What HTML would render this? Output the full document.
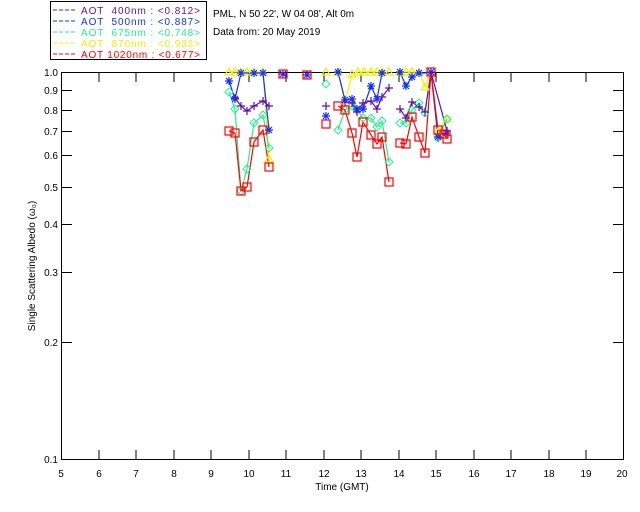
<!DOCTYPE html>
<html><head><style>
html,body{margin:0;padding:0;background:#fff;width:640px;height:512px;overflow:hidden}
svg text{font-family:"Liberation Sans",sans-serif;font-size:10px}
</style></head><body>
<svg width="640" height="512" xmlns="http://www.w3.org/2000/svg">
<defs>
<g id="pl"><path d="M-4 0H4M0 -4V4" stroke="#6010b0" stroke-width="1.2" fill="none"/></g>
<g id="as"><path d="M-4 0H4M0 -4V4M-3 -3L3 3M-3 3L3 -3" stroke="#1030ff" stroke-width="1.2" fill="none"/></g>
<g id="di"><path d="M0 -4L4 0L0 4L-4 0Z" stroke="#20f090" stroke-width="1" fill="none"/></g>
<g id="tr"><path d="M0 -4L4 3H-4Z" stroke="#f0f000" stroke-width="1.2" fill="none"/></g>
<g id="sq"><rect x="-4" y="-4" width="8" height="8" stroke="#ff0000" stroke-width="1.2" fill="none"/></g>
</defs>
<rect x="50.5" y="1.5" width="156" height="58" fill="none" stroke="#000"/>
<g stroke-width="1" stroke-dasharray="4,2">
<line x1="53" y1="10" x2="76" y2="10" stroke="#6010b0"/>
<line x1="53" y1="21" x2="76" y2="21" stroke="#1030ff"/>
<line x1="53" y1="32" x2="76" y2="32" stroke="#20f090"/>
<line x1="53" y1="43" x2="76" y2="43" stroke="#f0f000"/>
<line x1="53" y1="54" x2="76" y2="54" stroke="#ff0000"/>
</g>
<text x="81" y="14" fill="#6010b0" xml:space="preserve" textLength="119" lengthAdjust="spacing">AOT  400nm : &lt;0.812&gt;</text>
<text x="81" y="25" fill="#1030ff" xml:space="preserve" textLength="119" lengthAdjust="spacing">AOT  500nm : &lt;0.887&gt;</text>
<text x="81" y="36" fill="#20f090" xml:space="preserve" textLength="119" lengthAdjust="spacing">AOT  675nm : &lt;0.748&gt;</text>
<text x="81" y="47" fill="#f0f000" xml:space="preserve" textLength="119" lengthAdjust="spacing">AOT  870nm : &lt;0.932&gt;</text>
<text x="81" y="58" fill="#ff0000" xml:space="preserve" textLength="119" lengthAdjust="spacing">AOT 1020nm : &lt;0.677&gt;</text>
<text x="213" y="17" fill="#000">PML, N 50 22', W 04 08', Alt 0m</text>
<text x="213" y="35" fill="#000">Data from: 20 May 2019</text>
<rect x="61.5" y="72.5" width="562" height="387" fill="none" stroke="#000"/>
<g stroke="#000">
<path d="M99 73v9M136 73v9M174 73v9M211 73v9M249 73v9M286 73v9M324 73v9M361 73v9M399 73v9M436 73v9M474 73v9M511 73v9M549 73v9M586 73v9"/>
<path d="M99 459v-9M136 459v-9M174 459v-9M211 459v-9M249 459v-9M286 459v-9M324 459v-9M361 459v-9M399 459v-9M436 459v-9M474 459v-9M511 459v-9M549 459v-9M586 459v-9"/>
<path d="M62 90.5h10M62 110.5h10M62 131.5h10M62 155.5h10M62 187.5h10M62 224.5h10M62 272.5h10M62 342.5h10"/>
<path d="M623 90.5h-10M623 110.5h-10M623 131.5h-10M623 155.5h-10M623 187.5h-10M623 224.5h-10M623 272.5h-10M623 342.5h-10"/>
</g>
<g fill="#000" text-anchor="end">
<text x="58" y="76">1.0</text><text x="58" y="94">0.9</text><text x="58" y="114">0.8</text>
<text x="58" y="135">0.7</text><text x="58" y="159">0.6</text><text x="58" y="191">0.5</text>
<text x="58" y="228">0.4</text><text x="58" y="276">0.3</text><text x="58" y="346">0.2</text>
<text x="58" y="463">0.1</text>
</g>
<g fill="#000" text-anchor="middle">
<text x="61" y="477">5</text><text x="99" y="477">6</text><text x="136" y="477">7</text><text x="174" y="477">8</text>
<text x="211" y="477">9</text><text x="249" y="477">10</text><text x="286" y="477">11</text><text x="324" y="477">12</text>
<text x="361" y="477">13</text><text x="399" y="477">14</text><text x="436" y="477">15</text><text x="474" y="477">16</text>
<text x="511" y="477">17</text><text x="549" y="477">18</text><text x="586" y="477">19</text><text x="622" y="477">20</text>
<text x="342" y="490">Time (GMT)</text>
</g>
<text transform="translate(35,266) rotate(-90)" text-anchor="middle" fill="#000">Single Scattering Albedo (ω₀)</text>
<g fill="none" stroke-width="1.2">
<polyline stroke="#f0f000" points="229,72 235,72 241,72 247,72 254,72 263,72 269,159"/>
<polyline stroke="#f0f000" points="338,72 345,103 352,74 358,72 364,72 371,72 377,72 382,72 389,72"/>
<polyline stroke="#f0f000" points="400,72 406,72 412,72 419,72 425,87 431,72 438,132 447,119"/>
<polyline stroke="#20f090" points="229,92 235,109 241,191 247,169 254,123 263,115 269,148"/>
<polyline stroke="#20f090" points="338,130 345,110 352,106 357,110 363,118 371,118 377,127 382,121 389,162"/>
<polyline stroke="#20f090" points="400,123 406,123 412,110 419,103 425,113 431,72 438,138 447,119"/>
<polyline stroke="#1030ff" points="229,81 235,99 241,73 247,73 254,73 263,73 269,130"/>
<polyline stroke="#1030ff" points="338,72 345,100 352,99 357,109 363,109 371,86 377,99 382,73 389,73"/>
<polyline stroke="#1030ff" points="400,72 406,86 412,77 419,73 425,73 431,72 438,137 447,133"/>
<polyline stroke="#6010b0" points="235,98 241,106 247,111 254,106 263,101 269,106"/>
<polyline stroke="#6010b0" points="345,102 352,103 357,112 363,103 371,101 377,109 382,97 389,88"/>
<polyline stroke="#6010b0" points="400,109 406,118 412,102 419,107 425,112 431,72 447,131"/>
<polyline stroke="#ff0000" points="229,131 235,133 241,191 247,187 254,142 263,130 269,167"/>
<polyline stroke="#ff0000" points="338,106 345,110 352,133 357,157 363,122 371,135 377,144 382,137 389,182"/>
<polyline stroke="#ff0000" points="400,143 406,144 412,117 419,137 425,153 431,72 438,130 444,134 447,139"/>
</g>
<g>
<use href="#tr" x="229" y="72"/><use href="#tr" x="235" y="72"/><use href="#tr" x="241" y="72"/><use href="#tr" x="247" y="72"/><use href="#tr" x="254" y="72"/><use href="#tr" x="263" y="72"/><use href="#tr" x="269" y="159"/>
<use href="#tr" x="326" y="72"/><use href="#tr" x="338" y="72"/><use href="#tr" x="345" y="103"/><use href="#tr" x="352" y="74"/><use href="#tr" x="358" y="72"/><use href="#tr" x="364" y="72"/><use href="#tr" x="371" y="72"/><use href="#tr" x="377" y="72"/><use href="#tr" x="382" y="72"/><use href="#tr" x="389" y="72"/>
<use href="#tr" x="400" y="72"/><use href="#tr" x="406" y="72"/><use href="#tr" x="412" y="72"/><use href="#tr" x="419" y="72"/><use href="#tr" x="425" y="87"/><use href="#tr" x="438" y="132"/><use href="#tr" x="447" y="119"/>
<use href="#di" x="229" y="92"/><use href="#di" x="235" y="109"/><use href="#di" x="241" y="191"/><use href="#di" x="247" y="169"/><use href="#di" x="254" y="123"/><use href="#di" x="263" y="115"/><use href="#di" x="269" y="148"/>
<use href="#di" x="326" y="84"/><use href="#di" x="338" y="130"/><use href="#di" x="345" y="110"/><use href="#di" x="352" y="106"/><use href="#di" x="357" y="110"/><use href="#di" x="363" y="118"/><use href="#di" x="371" y="118"/><use href="#di" x="377" y="127"/><use href="#di" x="382" y="121"/><use href="#di" x="389" y="162"/>
<use href="#di" x="400" y="123"/><use href="#di" x="406" y="123"/><use href="#di" x="412" y="110"/><use href="#di" x="419" y="103"/><use href="#di" x="425" y="113"/><use href="#di" x="438" y="138"/><use href="#di" x="447" y="119"/>
<use href="#as" x="229" y="81"/><use href="#as" x="235" y="99"/><use href="#as" x="241" y="73"/><use href="#as" x="254" y="73"/><use href="#as" x="263" y="73"/><use href="#as" x="269" y="130"/>
<use href="#as" x="326" y="116"/><use href="#as" x="338" y="72"/><use href="#as" x="345" y="100"/><use href="#as" x="352" y="99"/><use href="#as" x="357" y="109"/><use href="#as" x="363" y="109"/><use href="#as" x="371" y="86"/><use href="#as" x="377" y="99"/><use href="#as" x="382" y="73"/>
<use href="#as" x="400" y="72"/><use href="#as" x="406" y="86"/><use href="#as" x="412" y="77"/><use href="#as" x="419" y="73"/><use href="#as" x="438" y="137"/><use href="#as" x="447" y="133"/>
<use href="#pl" x="235" y="98"/><use href="#pl" x="241" y="106"/><use href="#pl" x="247" y="111"/><use href="#pl" x="254" y="106"/><use href="#pl" x="263" y="101"/><use href="#pl" x="269" y="106"/>
<use href="#pl" x="326" y="106"/><use href="#pl" x="345" y="102"/><use href="#pl" x="352" y="103"/><use href="#pl" x="357" y="112"/><use href="#pl" x="363" y="103"/><use href="#pl" x="371" y="101"/><use href="#pl" x="377" y="109"/><use href="#pl" x="382" y="97"/><use href="#pl" x="389" y="88"/>
<use href="#pl" x="400" y="109"/><use href="#pl" x="406" y="118"/><use href="#pl" x="412" y="102"/><use href="#pl" x="419" y="107"/><use href="#pl" x="425" y="112"/><use href="#pl" x="447" y="131"/>
<use href="#as" x="283" y="74"/><use href="#as" x="307" y="75"/><use href="#as" x="431" y="72"/>
<use href="#sq" x="229" y="131"/><use href="#sq" x="235" y="133"/><use href="#sq" x="241" y="191"/><use href="#sq" x="247" y="187"/><use href="#sq" x="254" y="142"/><use href="#sq" x="263" y="130"/><use href="#sq" x="269" y="167"/>
<use href="#sq" x="283" y="74"/><use href="#sq" x="307" y="75"/><use href="#sq" x="326" y="124"/>
<use href="#sq" x="338" y="106"/><use href="#sq" x="345" y="110"/><use href="#sq" x="352" y="133"/><use href="#sq" x="357" y="157"/><use href="#sq" x="363" y="122"/><use href="#sq" x="371" y="135"/><use href="#sq" x="377" y="144"/><use href="#sq" x="382" y="137"/><use href="#sq" x="389" y="182"/>
<use href="#sq" x="400" y="143"/><use href="#sq" x="406" y="144"/><use href="#sq" x="412" y="117"/><use href="#sq" x="419" y="137"/><use href="#sq" x="425" y="153"/><use href="#sq" x="431" y="72"/><use href="#sq" x="438" y="130"/><use href="#sq" x="444" y="134"/><use href="#sq" x="447" y="139"/>
</g>
</svg>
</body></html>
